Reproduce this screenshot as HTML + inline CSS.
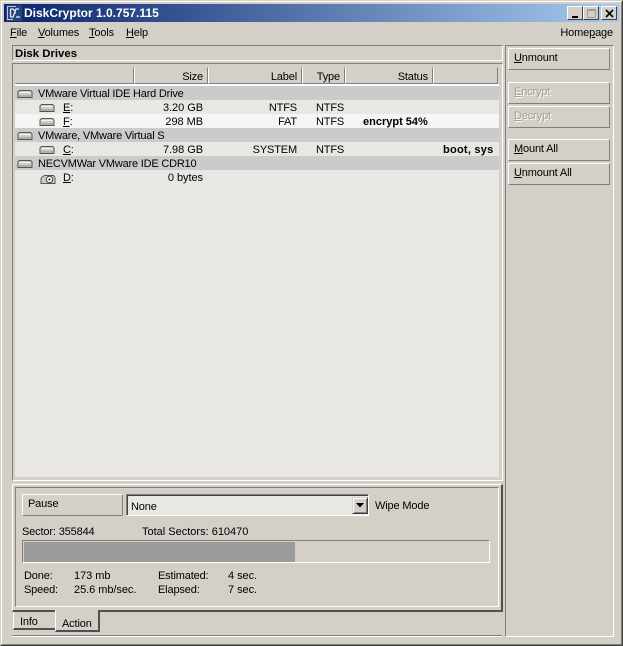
<!DOCTYPE html>
<html><head><meta charset="utf-8"><style>
html,body{margin:0;padding:0;background:#d4d0c8;}
body{width:623px;height:646px;position:relative;overflow:hidden;font:11px "Liberation Sans",sans-serif;color:#000;}
div{position:absolute;box-sizing:border-box;white-space:nowrap;}
.t{line-height:14px;height:14px;font-size:11px;letter-spacing:-.15px;}
.n{letter-spacing:-.05px;}
.r{text-align:right;}
.b{font:bold 11px "Liberation Sans",sans-serif;line-height:14px;letter-spacing:.1px;}
.up{border:1px solid;border-color:#fff #808080 #808080 #fff;background:#d4d0c8;}
.btn{left:508px;width:102px;height:22px;border:1px solid;border-color:#fff #808080 #808080 #fff;padding-left:5px;line-height:18px;font-size:11px;letter-spacing:-.15px;}
.dis{color:#a09d96;text-shadow:1px 1px 0 #fff;}
.hd{top:67px;height:17px;background:#d4d0c8;border:1px solid;border-color:transparent #808080 #808080 #fff;text-align:right;padding-right:4px;line-height:19px;font-size:11px;letter-spacing:-.15px;}
.g{left:15px;width:484px;height:14px;background:#cbcbcb;}
.w{left:15px;width:484px;height:14px;background:#e8e7e3;}
u{text-decoration:underline;}
svg{position:absolute;}
</style></head><body>
<!-- window frame -->
<div style="left:0;top:0;width:623px;height:646px;border:1px solid;border-color:#d4d0c8 #404040 #404040 #d4d0c8;"></div>
<div style="left:1px;top:1px;width:621px;height:644px;border:1px solid;border-color:#fff #808080 #808080 #fff;"></div>
<!-- title bar -->
<div style="left:4px;top:4px;width:615px;height:18px;background:linear-gradient(90deg,#0a246a,#a6caf0);"></div>
<svg style="left:6px;top:5px" width="16" height="16"><rect width="16" height="16" fill="#27447e"/><path d="M1 1.500h9M1.500 1v13M1 14.500h6" stroke="#b9c6dc" fill="none"/><path d="M4.500 4v8M4.500 4h2.500l2 2v3M4.500 12h2.500l3-8h3M10 12h4" fill="none" stroke="#e8eef8" stroke-width="1.300"/></svg>
<div style="left:24px;top:5px;height:16px;color:#fff;font:bold 12px/17px 'Liberation Sans',sans-serif;">DiskCryptor 1.0.757.115</div>
<!-- title buttons -->
<div class="up" style="left:567px;top:6px;width:16px;height:14px;border-color:#fff #404040 #404040 #fff;"><div style="left:4px;top:9px;width:6px;height:2px;background:#000;"></div></div>
<div class="up" style="left:583px;top:6px;width:16px;height:14px;border-color:#fff #404040 #404040 #fff;"><div style="left:3px;top:2px;width:9px;height:9px;border:1px solid #a09d96;border-top-width:2px;"></div></div>
<div class="up" style="left:601px;top:6px;width:16px;height:14px;border-color:#fff #404040 #404040 #fff;"><svg style="left:3px;top:2px" width="9" height="9"><path d="M1 1l7 7M8 1L1 8" stroke="#000" stroke-width="1.600"/></svg></div>
<!-- menu -->
<div class="t" style="left:10px;top:26px;"><u>F</u>ile</div>
<div class="t" style="left:38px;top:26px;"><u>V</u>olumes</div>
<div class="t" style="left:89px;top:26px;"><u>T</u>ools</div>
<div class="t" style="left:126px;top:26px;"><u>H</u>elp</div>
<div class="t r" style="right:10px;top:26px;">Home<u>p</u>age</div>
<!-- disk drives title -->
<div style="left:12px;top:45px;width:491px;height:16px;border:1px solid;border-color:#808080 #fff #fff #808080;"></div>
<div class="t" style="left:15px;top:47px;font-weight:bold;font-size:11.400px;letter-spacing:0;">Disk Drives</div>
<!-- list frame -->
<div style="left:12px;top:63px;width:491px;height:418px;border:1px solid;border-color:#808080 #fff #fff #808080;background:#e8e7e3;"></div>
<div style="left:13px;top:64px;width:489px;height:22px;background:#d4d0c8;"></div>
<div style="left:13px;top:64px;width:2px;height:416px;background:#d4d0c8;"></div>
<div style="left:499px;top:64px;width:3px;height:416px;background:#d4d0c8;"></div>
<div style="left:13px;top:477px;width:489px;height:3px;background:#d4d0c8;"></div>
<div style="left:15px;top:84px;width:484px;height:2px;background:#fff;"></div>
<div class="hd" style="left:15px;width:119px;border-left-color:transparent;"></div>
<div class="hd" style="left:134px;width:74px;">Size</div>
<div class="hd" style="left:208px;width:94px;">Label</div>
<div class="hd" style="left:302px;width:43px;">Type</div>
<div class="hd" style="left:345px;width:88px;">Status</div>
<div class="hd" style="left:433px;width:65px;"></div>
<!-- rows -->
<div class="g" style="top:86px;"></div>
<div class="w" style="top:100px;"></div>
<div class="w" style="top:114px;background:#f6f5f3;"></div>
<div class="g" style="top:128px;"></div>
<div class="w" style="top:142px;"></div>
<div class="g" style="top:156px;"></div>
<svg style="left:0;top:0" width="623" height="200">
<defs><g id="d"><path d="M2.500 .500h11l1.500 1.500v5.500h-14v-5.500z" fill="#cfcdc6" stroke="#555"/><path d="M2 2.500h12" stroke="#f4f3ef"/><path d="M2 5.500h12v1h-12z" fill="#8f8f8a"/></g></defs>
<use href="#d" x="17" y="90"/><use href="#d" x="39" y="104"/><use href="#d" x="39" y="118"/><use href="#d" x="17" y="132"/><use href="#d" x="39" y="146"/><use href="#d" x="17" y="160"/>
<path d="M41.500 177.500l3-2h9l1.500 2v6h-14v-4z" fill="#cfcdc6" stroke="#555"/><circle cx="49.500" cy="179.500" r="3.200" fill="#fff" stroke="#404040"/><circle cx="49.500" cy="179.500" r="1" fill="#000"/>
</svg>
<div class="t" style="left:38px;top:87px;letter-spacing:-.2px;">VMware Virtual IDE Hard Drive</div>
<div class="t" style="left:63px;top:101px;"><u>E</u>:</div>
<div class="t r n" style="right:420px;top:101px;">3.20 GB</div>
<div class="t r" style="right:326px;top:101px;">NTFS</div>
<div class="t" style="left:316px;top:101px;">NTFS</div>
<div class="t" style="left:63px;top:115px;"><u>F</u>:</div>
<div class="t r n" style="right:420px;top:115px;">298 MB</div>
<div class="t r" style="right:326px;top:115px;">FAT</div>
<div class="t" style="left:316px;top:115px;">NTFS</div>
<div class="b" style="left:363px;top:115px;letter-spacing:0;">encrypt 54%</div>
<div class="t" style="left:38px;top:129px;letter-spacing:-.2px;">VMware, VMware Virtual S</div>
<div class="t" style="left:63px;top:143px;"><u>C</u>:</div>
<div class="t r n" style="right:420px;top:143px;">7.98 GB</div>
<div class="t r" style="right:326px;top:143px;">SYSTEM</div>
<div class="t" style="left:316px;top:143px;">NTFS</div>
<div class="b" style="left:443px;top:143px;letter-spacing:.25px;">boot, sys</div>
<div class="t" style="left:38px;top:157px;letter-spacing:-.2px;">NECVMWar VMware IDE CDR10</div>
<div class="t" style="left:63px;top:171px;"><u>D</u>:</div>
<div class="t r n" style="right:420px;top:171px;">0 bytes</div>
<!-- right panel -->
<div style="left:505px;top:45px;width:109px;height:592px;border:1px solid;border-color:#808080 #fff #fff #808080;"></div>
<div class="btn" style="top:48px;"><u>U</u>nmount</div>
<div class="btn dis" style="top:82px;"><u>E</u>ncrypt</div>
<div class="btn dis" style="top:106px;"><u>D</u>ecrypt</div>
<div class="btn" style="top:139px;"><u>M</u>ount All</div>
<div class="btn" style="top:163px;"><u>U</u>nmount All</div>
<!-- bottom panel -->
<div style="left:12px;top:484px;width:491px;height:128px;border:solid;border-color:#fff #505050 #505050 #fff;border-width:1px 2px 2px 1px;"></div>
<div style="left:15px;top:487px;width:484px;height:120px;border:1px solid;border-color:#808080 #fff #fff #808080;"></div>
<div class="up" style="left:22px;top:494px;width:101px;height:22px;line-height:18px;padding-left:5px;font-size:11px;letter-spacing:-.15px;">Pause</div>
<div style="left:126px;top:494px;width:243px;height:22px;background:#e8e7e3;border:1px solid;border-color:#808080 #fff #fff #808080;box-shadow:inset 1px 1px 0 #404040;"></div>
<div class="t" style="left:131px;top:500px;">None</div>
<div class="up" style="left:352px;top:497px;width:16px;height:17px;border-color:#d4d0c8 #404040 #404040 #d4d0c8;box-shadow:inset 1px 1px 0 #fff,inset -1px -1px 0 #808080;"><svg style="left:3px;top:5px" width="9" height="6"><path d="M0 0h8L4 4.500z" fill="#000"/></svg></div>
<div class="t" style="left:375px;top:499px;">Wipe Mode</div>
<div class="t" style="left:22px;top:525px;">Sector: 355844</div>
<div class="t" style="left:142px;top:525px;letter-spacing:0;">Total Sectors: 610470</div>
<div style="left:22px;top:540px;width:468px;height:23px;border:1px solid;border-color:#808080 #fff #fff #808080;"><div style="left:1px;top:1px;width:271px;height:20px;background:#9c9c9c;"></div></div>
<div class="t" style="left:24px;top:569px;">Done:</div>
<div class="t n" style="left:74px;top:569px;">173 mb</div>
<div class="t" style="left:158px;top:569px;">Estimated:</div>
<div class="t n" style="left:228px;top:569px;">4 sec.</div>
<div class="t" style="left:24px;top:583px;">Speed:</div>
<div class="t n" style="left:74px;top:583px;">25.6 mb/sec.</div>
<div class="t" style="left:158px;top:583px;">Elapsed:</div>
<div class="t n" style="left:228px;top:583px;">7 sec.</div>
<!-- tabs -->
<div style="left:13px;top:612px;width:42px;height:18px;border:solid;border-color:transparent #404040 #505050 #fff;border-width:0 0 2px 1px;padding-left:6px;line-height:20px;font-size:11px;letter-spacing:-.15px;">Info</div>
<div style="left:55px;top:610px;width:45px;height:22px;background:#d4d0c8;border:solid;border-color:transparent #505050 #505050 #fff;border-width:0 2px 2px 1px;padding:5px 0 0 6px;line-height:18px;font-size:11px;letter-spacing:-.15px;">Action</div>
<div style="left:12px;top:635px;width:490px;height:1px;background:#808080;"></div>
<div style="left:12px;top:636px;width:490px;height:1px;background:#fff;"></div>
</body></html>
